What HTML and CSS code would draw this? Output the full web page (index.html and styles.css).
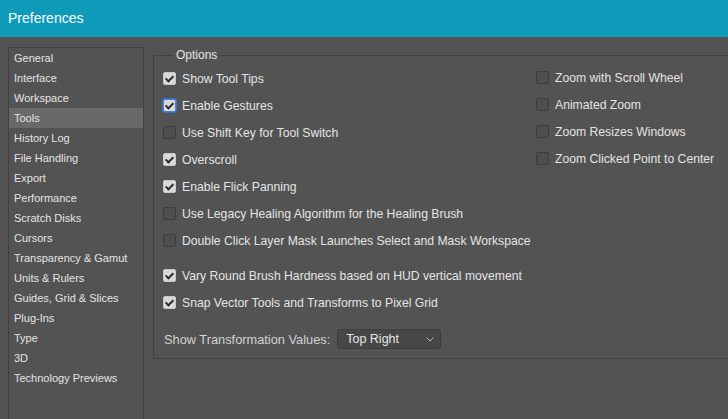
FILE: index.html
```html
<!DOCTYPE html>
<html>
<head>
<meta charset="utf-8">
<link rel="stylesheet" href="styles.css">
</head>
<body>
<header class="titlebar">Preferences</header>
<div class="content">
  <nav class="sidebar">
    <div class="nav-item">General</div>
    <div class="nav-item">Interface</div>
    <div class="nav-item">Workspace</div>
    <div class="nav-item selected">Tools</div>
    <div class="nav-item">History Log</div>
    <div class="nav-item">File Handling</div>
    <div class="nav-item">Export</div>
    <div class="nav-item">Performance</div>
    <div class="nav-item">Scratch Disks</div>
    <div class="nav-item">Cursors</div>
    <div class="nav-item">Transparency &amp; Gamut</div>
    <div class="nav-item">Units &amp; Rulers</div>
    <div class="nav-item">Guides, Grid &amp; Slices</div>
    <div class="nav-item">Plug-Ins</div>
    <div class="nav-item">Type</div>
    <div class="nav-item">3D</div>
    <div class="nav-item">Technology Previews</div>
  </nav>
  <fieldset class="options">
    <legend>Options</legend>
    <div class="columns">
      <div class="col col-left">
        <div class="row"><span class="cb checked"></span>Show Tool Tips</div>
        <div class="row"><span class="cb checked focused"></span>Enable Gestures</div>
        <div class="row"><span class="cb"></span>Use Shift Key for Tool Switch</div>
        <div class="row"><span class="cb checked"></span>Overscroll</div>
        <div class="row"><span class="cb checked"></span>Enable Flick Panning</div>
        <div class="row"><span class="cb"></span>Use Legacy Healing Algorithm for the Healing Brush</div>
        <div class="row"><span class="cb"></span>Double Click Layer Mask Launches Select and Mask Workspace</div>
        <div class="row spaced"><span class="cb checked"></span>Vary Round Brush Hardness based on HUD vertical movement</div>
        <div class="row"><span class="cb checked"></span>Snap Vector Tools and Transforms to Pixel Grid</div>
      </div>
      <div class="col col-right">
        <div class="row"><span class="cb"></span>Zoom with Scroll Wheel</div>
        <div class="row"><span class="cb"></span>Animated Zoom</div>
        <div class="row"><span class="cb"></span>Zoom Resizes Windows</div>
        <div class="row"><span class="cb"></span>Zoom Clicked Point to Center</div>
      </div>
    </div>
    <div class="select-row">
      <span class="select-label">Show Transformation Values:</span>
      <div class="select">
        <span>Top Right</span>
        <svg class="chev" width="8" height="5" viewBox="0 0 8 5"><path d="M0.5 0.5 L4 4 L7.5 0.5" fill="none" stroke="#bdbdbd" stroke-width="1"/></svg>
      </div>
    </div>
  </fieldset>
</div>
</body>
</html>
```
FILE: styles.css
```css
html, body {
  margin: 0;
  padding: 0;
  overflow: hidden;
  height: 100%;
}
body {
  background: #535353;
  font-family: "Liberation Sans", Arial, sans-serif;
  font-size: 12px;
  color: #e4e4e4;
}
.titlebar {
  height: 37px;
  background: #0e9bb9;
  color: #ffffff;
  font-size: 14px;
  line-height: 37px;
  padding-left: 8px;
  box-sizing: border-box;
}
.content {
  display: flex;
  align-items: flex-start;
  padding: 10px 0 0 8px;
  gap: 9px;
}
.sidebar {
  width: 134px;
  height: 371px;
  border: 1px solid #414141;
  border-bottom: none;
  flex-shrink: 0;
}
.nav-item {
  height: 20px;
  line-height: 21px;
  padding-left: 5px;
  white-space: nowrap;
  font-size: 11px;
}
.nav-item.selected {
  background: #696969;
}
.options {
  flex: 1;
  margin: 0;
  padding: 2px 0 9px 9px;
  border: 1px solid #414141;
  border-right: none;
  min-width: 0;
}
.options legend {
  margin-left: 10px;
  padding: 0 3px;
  line-height: 16px;
  color: #e4e4e4;
}
.columns {
  display: grid;
  grid-template-columns: 373px 1fr;
  font-size: 12.2px;
}
.col-right {
  margin-top: -1px;
}
.row {
  display: flex;
  align-items: center;
  height: 27px;
  white-space: nowrap;
}
.row.spaced {
  margin-top: 8px;
}
.cb {
  width: 11px;
  height: 11px;
  border: 1px solid #3c3c3c;
  border-radius: 2px;
  background: #4e4e4e;
  margin-right: 6px;
  flex-shrink: 0;
  position: relative;
}
.cb.checked {
  background: #d9d9d9;
  border-color: #c8c8c8;
}
.cb.checked::after {
  content: "";
  position: absolute;
  left: 3px;
  top: 1px;
  width: 3px;
  height: 6px;
  border-right: 2px solid #2a2a2a;
  border-bottom: 2px solid #2a2a2a;
  transform: rotate(45deg);
}
.cb.focused {
  border-color: #4b80d6;
  box-shadow: 0 0 0 1px #3b6fc2;
}
.select-row {
  display: flex;
  align-items: center;
  margin-top: 13px;
  gap: 7px;
}
.select-label {
  color: #d2d2d2;
  padding-left: 1px;
  font-size: 12.8px;
}
.select {
  height: 18px;
  border: 1px solid #3d3d3d;
  border-radius: 3px;
  background: #474747;
  display: flex;
  align-items: center;
  justify-content: space-between;
  padding: 0 6px 0 8px;
  box-sizing: content-box;
  width: 88px;
  color: #e6e6e6;
  font-size: 12.5px;
}
.chev {
  display: block;
}
```
